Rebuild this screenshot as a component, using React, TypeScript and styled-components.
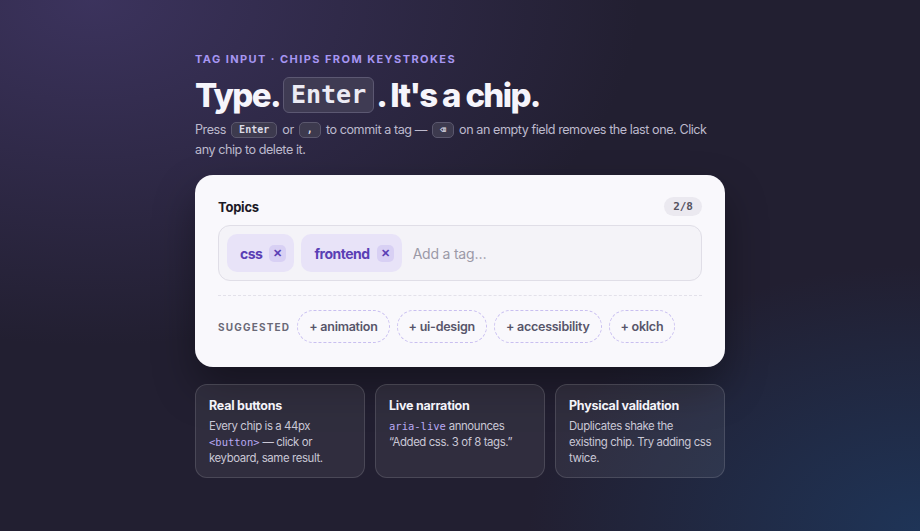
import { useState } from "react";
import styled, { createGlobalStyle } from "styled-components";

const GlobalStyle = createGlobalStyle`
  html, body {
    margin: 0;
    padding: 0;
    height: 100%;
  }
  body {
    font-family: Inter, "Noto Sans", sans-serif;
    letter-spacing: -0.015em;
    background-color: #221f31;
    background-image:
      radial-gradient(ellipse 760px 480px at 10% 0%, rgba(66, 56, 104, 0.8), transparent 72%),
      radial-gradient(ellipse 560px 380px at 100% 100%, rgba(30, 56, 94, 0.85), transparent 70%);
    min-height: 531px;
  }
  #root {
    min-height: 531px;
  }
`;

const MONO = `"DejaVu Sans Mono", "Liberation Mono", monospace`;

const Page = styled.main`
  width: 530px;
  margin: 0 auto;
  padding-top: 52px;
  display: flex;
  flex-direction: column;
`;

const Eyebrow = styled.div`
  font-size: 11px;
  font-weight: 700;
  letter-spacing: 0.13em;
  text-transform: uppercase;
  color: #a796f2;
  line-height: 14px;
`;

const Title = styled.h1`
  margin: 11px 0 0;
  font-size: 33px;
  font-weight: 800;
  letter-spacing: -0.05em;
  color: #f6f5fb;
  line-height: 36px;
  display: flex;
  align-items: center;
`;

const TitleKey = styled.kbd`
  font-family: ${MONO};
  font-size: 25px;
  font-weight: 700;
  letter-spacing: 0;
  background: #3f3b53;
  border: 1px solid #5c5872;
  border-radius: 6px;
  padding: 0 7px;
  height: 34px;
  line-height: 34px;
  margin: 0 2px 0 3px;
  color: #ecebf4;
`;

const Lead = styled.p`
  margin: 7px 0 0;
  font-size: 12.6px;
  letter-spacing: -0.035em;
  line-height: 20px;
  color: #bdbacd;
`;

const Key = styled.kbd`
  font-family: ${MONO};
  font-size: 10px;
  font-weight: 700;
  letter-spacing: 0;
  line-height: 12px;
  color: #dcdbe6;
  background: #3d3a4e;
  border: 1px solid #5b586e;
  border-radius: 5px;
  padding: 1px 7px;
  margin: 0 2px;
  display: inline-block;
  vertical-align: 1px;
`;

const Card = styled.section`
  margin-top: 15px;
  background: #f9f8fc;
  border-radius: 18px;
  padding: 22px 23px 24px;
  box-shadow: 0 20px 40px rgba(0, 0, 0, 0.35);
  display: flex;
  flex-direction: column;
`;

const CardHead = styled.div`
  display: flex;
  align-items: center;
  justify-content: space-between;
`;

const Label = styled.label`
  font-size: 13px;
  font-weight: 700;
  color: #1c1a26;
`;

const Counter = styled.span`
  font-family: ${MONO};
  font-size: 11px;
  font-weight: 700;
  letter-spacing: 0;
  color: #54525f;
  background: #ebe9f0;
  border-radius: 999px;
  padding: 2px 9px;
  line-height: 15px;
`;

const Field = styled.div`
  margin-top: 9px;
  height: 56px;
  box-sizing: border-box;
  border: 1px solid #e0dee7;
  background: #f4f3f8;
  border-radius: 12px;
  padding: 0 8px;
  display: flex;
  align-items: center;
  gap: 7px;
`;

const Chip = styled.button`
  height: 38px;
  border: none;
  border-radius: 10px;
  background: #e8e3f8;
  color: #5a3fb5;
  font-family: inherit;
  font-size: 14px;
  font-weight: 700;
  letter-spacing: -0.035em;
  padding: 0 8px 0 13px;
  display: flex;
  align-items: center;
  gap: 7px;
  cursor: pointer;
`;

const ChipX = styled.span`
  width: 17px;
  height: 17px;
  border-radius: 5px;
  background: #d8d0f4;
  display: flex;
  align-items: center;
  justify-content: center;
  font-size: 11px;
  font-weight: 700;
  letter-spacing: 0;
  line-height: 1;
`;

const TagInput = styled.input`
  flex: 1;
  border: none;
  background: transparent;
  outline: none;
  font-family: inherit;
  font-size: 14px;
  letter-spacing: -0.015em;
  color: #1c1a26;
  padding-left: 4px;
  &::placeholder {
    color: #9b99a7;
  }
`;

const Divider = styled.hr`
  margin: 14px 0 14px;
  border: none;
  border-top: 1px dashed #e3e1ea;
`;

const SuggestRow = styled.div`
  display: flex;
  align-items: center;
  gap: 7px;
`;

const SuggestLabel = styled.span`
  font-size: 10px;
  font-weight: 700;
  letter-spacing: 0.12em;
  color: #6a6977;
`;

const Suggestion = styled.button`
  height: 33px;
  border: 1px dashed #c9bff0;
  background: transparent;
  border-radius: 999px;
  padding: 0 11px;
  font-family: inherit;
  font-size: 12.5px;
  font-weight: 600;
  letter-spacing: -0.02em;
  color: #57556a;
  cursor: pointer;
`;

const Notes = styled.div`
  margin-top: 17px;
  display: grid;
  grid-template-columns: repeat(3, 1fr);
  gap: 10px;
`;

const Note = styled.article`
  height: 94px;
  box-sizing: border-box;
  background: rgba(255, 255, 255, 0.065);
  border: 1px solid rgba(255, 255, 255, 0.13);
  border-radius: 12px;
  padding: 13px 11px 13px 13px;
`;

const NoteTitle = styled.h3`
  margin: 0;
  font-size: 12.5px;
  font-weight: 700;
  color: #f4f3f9;
  line-height: 16px;
`;

const NoteBody = styled.p`
  margin: 4px 0 0;
  font-size: 11.4px;
  letter-spacing: -0.035em;
  line-height: 16px;
  color: #c9c7d5;
`;

const Code = styled.code`
  font-family: ${MONO};
  font-size: 10.5px;
  letter-spacing: 0;
  color: #b9a9f3;
`;

const suggestions = ["animation", "ui-design", "accessibility", "oklch"];

export default function App() {
  const [tags, setTags] = useState<string[]>(["css", "frontend"]);

  return (
    <>
      <GlobalStyle />
      <Page>
        <Eyebrow>Tag input · chips from keystrokes</Eyebrow>
        <Title>
          Type.<TitleKey>Enter</TitleKey>. It's a chip.
        </Title>
        <Lead>
          Press <Key>Enter</Key> or <Key>,</Key> to commit a tag — <Key>⌫</Key> on an
          empty field removes the last one. Click any chip to delete it.
        </Lead>

        <Card>
          <CardHead>
            <Label htmlFor="tag-input">Topics</Label>
            <Counter>{tags.length}/8</Counter>
          </CardHead>
          <Field>
            {tags.map((t) => (
              <Chip key={t} onClick={() => setTags(tags.filter((x) => x !== t))}>
                {t}
                <ChipX>✕</ChipX>
              </Chip>
            ))}
            <TagInput id="tag-input" placeholder="Add a tag…" />
          </Field>
          <Divider />
          <SuggestRow>
            <SuggestLabel>SUGGESTED</SuggestLabel>
            {suggestions.map((s) => (
              <Suggestion key={s}>+ {s}</Suggestion>
            ))}
          </SuggestRow>
        </Card>

        <Notes>
          <Note>
            <NoteTitle>Real buttons</NoteTitle>
            <NoteBody>
              Every chip is a 44px <Code>&lt;button&gt;</Code> — click or keyboard, same
              result.
            </NoteBody>
          </Note>
          <Note>
            <NoteTitle>Live narration</NoteTitle>
            <NoteBody>
              <Code>aria-live</Code> announces “Added css. 3 of 8 tags.”
            </NoteBody>
          </Note>
          <Note>
            <NoteTitle>Physical validation</NoteTitle>
            <NoteBody>Duplicates shake the existing chip. Try adding css twice.</NoteBody>
          </Note>
        </Notes>
      </Page>
    </>
  );
}
